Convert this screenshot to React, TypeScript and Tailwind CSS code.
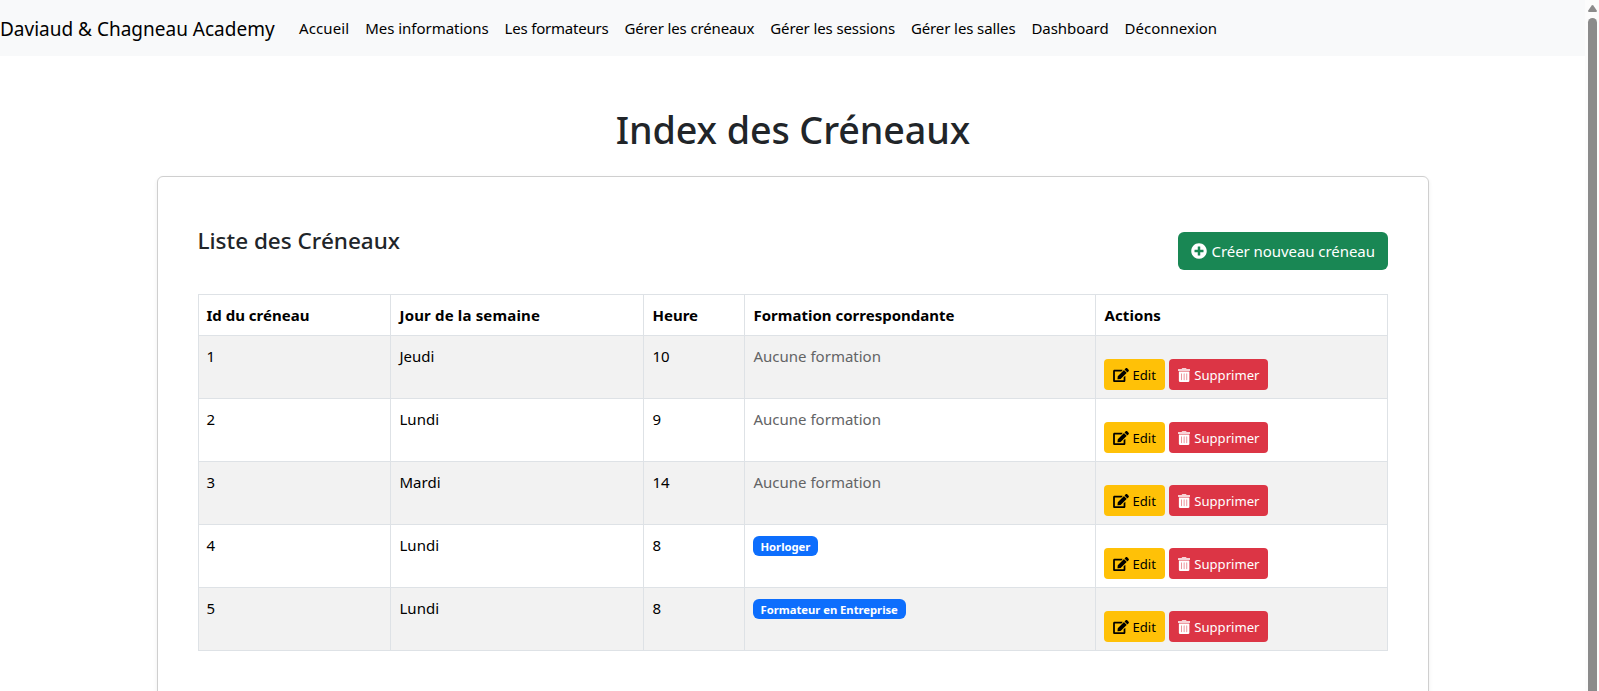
import { FaEdit, FaPlusCircle } from "react-icons/fa";

const navLinks = [
  { label: "Accueil", className: "w-[66.3px] tracking-[0.1px]" },
  { label: "Mes informations", className: "w-[139.3px] tracking-[-0.04px]" },
  { label: "Les formateurs", className: "w-[119.9px] tracking-[-0.2px]" },
  { label: "Gérer les créneaux", className: "w-[145.8px] tracking-[-0.13px]" },
  { label: "Gérer les sessions", className: "w-[140.6px] tracking-[-0.11px]" },
  { label: "Gérer les salles", className: "w-[120.6px] tracking-[-0.1px]" },
  { label: "Dashboard", className: "w-[93.1px] tracking-[-0.06px]" },
  { label: "Déconnexion", className: "w-[108.5px]" },
];

const columns = [
  { label: "Id du créneau", className: "w-[192px] pl-2" },
  { label: "Jour de la semaine", className: "w-[253px] pl-[9px] tracking-[0.16px]" },
  { label: "Heure", className: "w-[101px] pl-[9px]" },
  { label: "Formation correspondante", className: "w-[351px] pl-[9px]" },
  { label: "Actions", className: "pl-[9px] tracking-[0.1px]" },
];

type Slot = { id: number; day: string; hour: number; training?: string };

const slots: Slot[] = [
  { id: 1, day: "Jeudi", hour: 10 },
  { id: 2, day: "Lundi", hour: 9 },
  { id: 3, day: "Mardi", hour: 14 },
  { id: 4, day: "Lundi", hour: 8, training: "Horloger" },
  { id: 5, day: "Lundi", hour: 8, training: "Formateur en Entreprise" },
];

function Navbar() {
  return (
    <nav className="flex h-14 items-start bg-[#f8f9fa] whitespace-nowrap text-black">
      <a className="w-[291px] pt-[14px] text-[19px] leading-[31px]">Daviaud &amp; Chagneau Academy</a>
      {navLinks.map((link) => (
        <a key={link.label} className={`px-2 pt-4 leading-6 ${link.className}`}>
          {link.label}
        </a>
      ))}
    </nav>
  );
}

function TrashIcon() {
  return (
    <svg className="mr-[4.5px] h-[14px] w-[12.25px] shrink-0" viewBox="0 0 448 512" fill="currentColor">
      <path
        opacity=".78"
        d="M432 32H312l-9.400-18.700A24 24 0 0 0 281.100 0H166.800a23.700 23.700 0 0 0-21.400 13.300L136 32H16A16 16 0 0 0 0 48v48a16 16 0 0 0 16 16h416a16 16 0 0 0 16-16V48a16 16 0 0 0-16-16z"
      />
      <path d="M32 128h384v336a48 48 0 0 1-48 48H80a48 48 0 0 1-48-48z" />
      <path
        fill="#dc3545"
        opacity=".6"
        d="M128 192h0a16 16 0 0 1 16 16v224a16 16 0 0 1-32 0V208a16 16 0 0 1 16-16zM224 192h0a16 16 0 0 1 16 16v224a16 16 0 0 1-32 0V208a16 16 0 0 1 16-16zM320 192h0a16 16 0 0 1 16 16v224a16 16 0 0 1-32 0V208a16 16 0 0 1 16-16z"
      />
    </svg>
  );
}

function Row({ slot }: { slot: Slot }) {
  const cell = "border border-[#dee2e6] py-2 pr-2 pl-[9px] align-top";
  return (
    <tr className="h-[63px] odd:bg-[#f2f2f2]">
      <td className="border border-[#dee2e6] p-2 align-top">{slot.id}</td>
      <td className={cell}>{slot.day}</td>
      <td className={cell}>{slot.hour}</td>
      <td className="border border-[#dee2e6] p-2 align-top">
        {slot.training ? (
          <span className="mt-[3px] block h-5 w-fit rounded-md bg-[#0d6efd] px-2 pt-px text-[11.3px] leading-5 font-bold tracking-[-0.04px] text-white">
            {slot.training}
          </span>
        ) : (
          <span className="ml-px text-[#636465]">Aucune formation</span>
        )}
      </td>
      <td className="border border-[#dee2e6] px-2 pt-[23px] align-top">
        <div className="flex h-[31px] gap-1 text-[13.1px]">
          <button className="flex w-[61px] items-center rounded bg-[#ffc107] pl-[9px] text-black">
            <FaEdit className="mr-[4px] h-[14px] w-[16px] shrink-0" />
            Edit
          </button>
          <button className="flex w-[99px] items-center rounded bg-[#dc3545] pl-[9px] text-white">
            <TrashIcon />
            Supprimer
          </button>
        </div>
      </td>
    </tr>
  );
}

function Scrollbar() {
  return (
    <div className="flex w-[14px] shrink-0 flex-col items-center bg-[#fcfcfc] pt-[5px]">
      <svg className="h-[7px] w-[9px] shrink-0" viewBox="0 0 9 7" fill="#8b8b8b">
        <path d="M3.7.5Q4.5-.5 5.3.5L8.8 5.6Q9.2 7 8 7H1Q-.2 7 .2 5.6Z" />
      </svg>
      <div className="mt-[6px] w-[9px] grow rounded-t-full bg-[#8b8b8b]" />
    </div>
  );
}

export default function App() {
  return (
    <div className="flex h-[691px] overflow-hidden bg-white font-['Noto_Sans','Open_Sans',sans-serif] text-[15px] leading-6 text-[#212529]">
      <div className="min-w-0 grow">
        <Navbar />
        <main className="mx-auto w-[1272px] pt-12">
          <h1 className="h-[72px] pt-[2px] pl-px text-center text-[37.7px] leading-[48px] font-[540] tracking-[-0.1px]">
            Index des Créneaux
          </h1>
          <section className="h-[700px] rounded-md border border-[#cfcfcf] px-10 pt-[49px] shadow-[0_2px_4px_rgba(0,0,0,0.075)]">
            <header className="mb-6 flex h-[44px] items-start justify-between">
              <h4 className="text-[22.5px] leading-[29px] font-medium">Liste des Créneaux</h4>
              <button className="mt-[6px] flex h-[38px] w-[210px] items-center rounded-md bg-[#198754] pl-[13px] tracking-[-0.06px] text-white">
                <FaPlusCircle className="mr-[5px] size-4" />
                Créer nouveau créneau
              </button>
            </header>
            <table className="w-[1190px] table-fixed border-collapse text-black">
              <thead>
                <tr className="h-[41px]">
                  {columns.map((column) => (
                    <th key={column.label} className={`border border-[#dee2e6] py-2 text-left font-bold ${column.className}`}>
                      {column.label}
                    </th>
                  ))}
                </tr>
              </thead>
              <tbody>
                {slots.map((slot) => (
                  <Row key={slot.id} slot={slot} />
                ))}
              </tbody>
            </table>
          </section>
        </main>
      </div>
      <Scrollbar />
    </div>
  );
}
